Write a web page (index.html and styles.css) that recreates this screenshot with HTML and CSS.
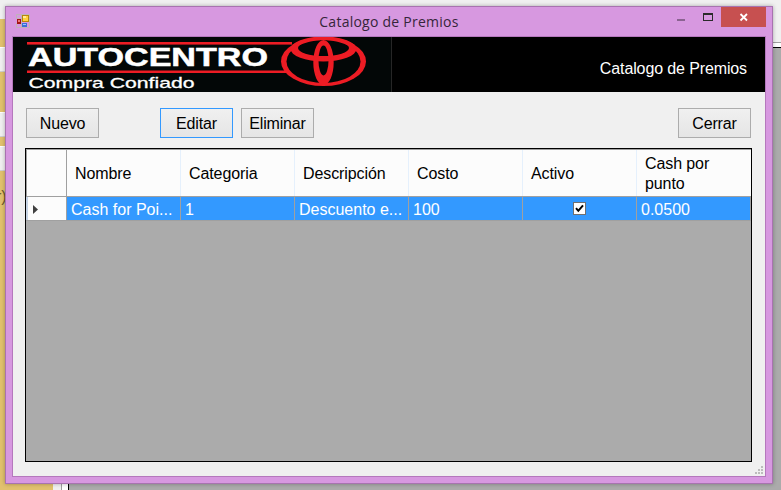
FILE: index.html
```html
<!DOCTYPE html>
<html lang="es">
<head>
<meta charset="utf-8">
<title>Catalogo de Premios</title>
<link rel="stylesheet" href="styles.css">
</head>
<body>
<div class="desktop">
  <div class="side">
    <div class="field first"></div>
    <div class="field second"></div>
    <div class="field third"></div>
    <span class="side-label">r)</span>
  </div>
  <div class="gutter"></div>
  <div class="workspace"><div class="mdi"></div></div>
</div>

<div class="window">
  <header class="titlebar">
    <svg class="app-icon" width="14" height="14" viewBox="0 0 14 14">
      <path d="M.5 .5h5v4h-5zM.5 9.500h5v4h-5zM5.500 .5h8v13h-8z" fill="none" stroke="#bfb3b8"/>
      <rect x="1" y="5" width="4" height="5" fill="#a31515"/><rect x="2" y="6" width="2" height="2" fill="#e77"/>
      <rect x="6" y="1" width="7" height="7" fill="#b8860b"/><rect x="7" y="2" width="5" height="5" fill="#ffd23c"/><rect x="7" y="2" width="3" height="2" fill="#ffeb9a"/>
      <rect x="6" y="9" width="5" height="4" fill="#3b6fd6"/><rect x="7" y="10" width="3" height="1" fill="#9cc4ff"/>
    </svg>
    <span class="title">Catalogo de Premios</span>
    <div class="controls">
      <svg width="92" height="20" viewBox="0 0 92 20">
        <rect x="3" y="12" width="8" height="2" fill="#8b6391"/>
        <path d="M29 6h10v8H29z M30 8v5h8V8z" fill="#2a2a2a" fill-rule="evenodd"/>
        <rect x="47" y="0" width="45" height="20" fill="#c75050"/>
        <path d="M66.500 7l6.500 6.500M73 7l-6.500 6.500" stroke="#fff" stroke-width="1.800"/>
      </svg>
    </div>
  </header>
  <main class="client">
    <div class="banner">
      <svg class="logo" width="379" height="55" viewBox="0 0 379 55">
        <rect width="379" height="55" fill="#030707"/>
        <rect x="378" width="1" height="55" fill="#262626"/>
        <g fill="#ed1c24">
          <rect x="14" y="5" width="265" height="2.600"/>
          <rect x="14" y="33.500" width="262" height="2.500"/>
        </g>
        <ellipse cx="310.500" cy="24.500" rx="42.500" ry="24.500" fill="#ed1c24"/>
        <ellipse cx="310.500" cy="24.500" rx="37" ry="21.500" fill="#030707"/>
        <g fill="#ed1c24" fill-rule="evenodd">
          <path d="M277.500 12a33 12.500 0 1 0 66 0a33 12.500 0 1 0 -66 0zM285 11a25.500 8 0 1 0 51 0a25.500 8 0 1 0 -51 0z"/>
          <path d="M300.300 25.500a10.200 22.500 0 1 0 20.400 0a10.200 22.500 0 1 0 -20.400 0zM305.500 23.500a5 15 0 1 0 10 0a5 15 0 1 0 -10 0z"/>
        </g>
        <text class="brand" x="15" y="29.300" textLength="240" lengthAdjust="spacingAndGlyphs">AUTOCENTRO</text>
        <text class="slogan" x="15.500" y="51" textLength="166" lengthAdjust="spacingAndGlyphs">Compra Confiado</text>
      </svg>
      <span class="heading">Catalogo de Premios</span>
    </div>
    <div class="toolbar">
      <button>Nuevo</button>
      <button class="edit">Editar</button>
      <button>Eliminar</button>
      <button class="close">Cerrar</button>
    </div>
    <div class="grid">
      <div class="row head">
        <div class="corner"></div><div>Nombre</div><div>Categoria</div><div>Descripción</div><div>Costo</div><div>Activo</div><div>Cash por punto</div>
      </div>
      <div class="row data">
        <div class="marker"><svg width="5" height="9" viewBox="0 0 5 9"><path d="M0 0L5 4.500L0 9z" fill="#404040"/></svg></div>
        <div>Cash for Poi...</div><div>1</div><div>Descuento e...</div><div>100</div>
        <div class="check"><svg width="13" height="13" viewBox="0 0 13 13"><rect x=".5" y=".5" width="12" height="12" fill="#fff" stroke="#707070"/><path d="M3 6.200L5.300 8.800L10 3.300" fill="none" stroke="#000" stroke-width="2"/></svg></div>
        <div>0.0500</div>
      </div>
    </div>
    <svg class="grip" width="8" height="8" viewBox="0 0 8 8"><path d="M6 0h2v2H6zM3 3h2v2H3zM6 3h2v2H6zM0 6h2v2H0zM3 6h2v2H3zM6 6h2v2H6z" fill="#bcbcbc"/></svg>
  </main>
</div>
</body>
</html>
```
FILE: styles.css
```css
* { box-sizing: border-box; }
body { margin: 0; width: 781px; height: 490px; overflow: hidden; background: #f0f0f0; font: 16px/20px "Liberation Sans", Arial, sans-serif; color: #000; }
.desktop { display: flex; height: 490px; }
.side { width: 53px; margin-top: 19px; background: #e1c16e; display: flex; flex-direction: column; }
.field { height: 25px; background: #f0f0f0; border-top: 1px solid #fff; border-bottom: 1px solid #d0d0d0; flex: none; }
.first { margin-top: 28px; }
.second { margin-top: 40px; }
.third { margin-top: 9px; }
.side-label { margin-top: 16px; margin-left: -4px; color: #6b5a2c; }
.gutter { width: 9px; margin-top: 42px; border-right: 1px solid #a0a0a0; }
.workspace { flex: 1; padding: 4px 0 0 6px; margin-top: 42px; border-top: 1px solid #a0a0a0; background: #fff; }
.mdi { height: 100%; background: #ababab; border-left: 1px solid #000; border-top: 1px solid #000; }
.window { position: absolute; left: 5px; top: 6px; width: 768px; height: 478px; background: #d798e0; border: 1px solid #a873b0; box-shadow: 0 0 4px rgba(0,0,0,.3); padding: 0 6px 6px; display: flex; flex-direction: column; }
.titlebar { height: 29px; flex: none; display: grid; grid-template-columns: 92px 1fr 92px; }
.app-icon { margin: 7px 0 0 4px; }
.title { text-align: center; font: 14px/29px "Open Sans", sans-serif; letter-spacing: .25px; color: #35263a; }
.controls svg { display: block; }
.client { flex: 1; border: 1px solid #b578bd; background: #f0f0f0; display: flex; flex-direction: column; }
.banner { height: 55px; flex: none; background: #000; display: flex; justify-content: space-between; }
.brand { font: bold 25px "Liberation Sans", Arial, sans-serif; fill: #fff; stroke: #fff; stroke-width: .5px; }
.slogan { font: 15px "Liberation Sans", Arial, sans-serif; fill: #fff; stroke: #fff; stroke-width: .3px; }
.heading { color: #fff; padding: 22px 18px 0 0; letter-spacing: -.12px; }
.toolbar { display: flex; padding: 16px 14px 0 13px; }
button { width: 73px; height: 30px; padding: 1px 0 0; font: inherit; letter-spacing: -.15px; color: #000; border: 1px solid #acacac; background: linear-gradient(#f0f0f0, #e5e5e5); }
.edit { margin: 0 8px 0 61px; border-color: #3399ff; }
.close { margin-left: auto; }
.grid { margin: 10px 13px 0 12px; height: 314px; border: 1px solid #000; background: #ababab; flex: none; }
.row { display: grid; grid-template-columns: 41px repeat(6, 114px); }
.head { height: 48px; background: #fcfcfc; border-top: 1px solid #a0a0a0; border-bottom: 1px solid #a0a0a0; }
.head div { display: flex; align-items: center; padding: 2px 30px 0 8px; letter-spacing: -.1px; border-right: 1px solid #e5f0fc; }
.head .corner { border-right-color: #a0a0a0; border-left: 1px solid #a0a0a0; }
.head div:last-child { border-right-color: #fcfcfc; }
.data { height: 24px; color: #fff; background: #3399ff; border-bottom: 1px solid #a0a0a0; }
.data div { padding: 3px 0 0 4px; border-right: 1px solid #a0a0a0; white-space: nowrap; }
.data .marker { display: flex; align-items: center; background: #fcfcfc; padding: 2px 0 0 5px; border-left: 2px solid #c5d3e5; }
.data .check { padding: 0; display: flex; align-items: center; justify-content: center; }
.grip { margin: 4px 2px 0 auto; }
```
